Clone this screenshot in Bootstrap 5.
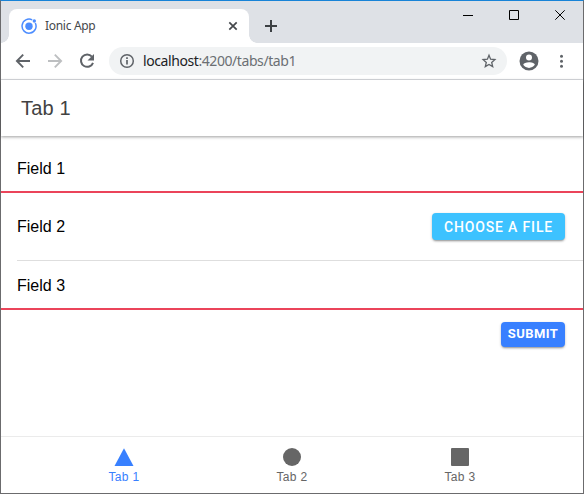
<!DOCTYPE html>
<html lang="en">
<head>
<meta charset="utf-8">
<meta name="viewport" content="width=device-width, initial-scale=1">
<title>Ionic App</title>
<link href="https://cdn.jsdelivr.net/npm/bootstrap@5.3.0/dist/css/bootstrap.min.css" rel="stylesheet">
<style>
body{font-family:"Liberation Sans",Arial,sans-serif;overflow:hidden;color:#000}
.window{height:494px;border:1px solid #6b6b6d;border-top-color:#1883d7}
.chrome-ui{font-family:"Noto Sans","Open Sans",sans-serif}
.titlebar{height:42px;background:#dee1e6;padding:8px 0 0 8px}
.browser-tab{width:240px;height:34px;border-radius:8px 8px 0 0;padding:0 10px 0 12px;font-size:12px;color:#45484c;position:relative}
.browser-tab::before,.browser-tab::after{content:"";position:absolute;bottom:0;width:8px;height:8px}
.browser-tab::before{left:-8px;background:radial-gradient(circle at 0 0,transparent 7.5px,#fff 8px)}
.browser-tab::after{right:-8px;background:radial-gradient(circle at 100% 0,transparent 7.5px,#fff 8px)}
.tab-title{letter-spacing:-.3px;margin-left:8px}
.toolbar{height:37px;border-bottom:1px solid #dadce0;padding:0 12px 0 14px}
.omnibox{height:28px;background:#f1f3f4;width:398px;margin-left:14px;padding:0 10px}
.url{font-size:14px;letter-spacing:-.42px;color:#202124;margin-left:8px;line-height:28px}
.url span{color:#6b6f73}
.avatar{margin-left:12px}
.app-header{height:56px;padding-left:20px;font-size:20px;letter-spacing:.15px;color:#424242;box-shadow:0 1px 3px rgba(0,0,0,.38);position:relative}
.field{padding:0 18px 0 16px;font-size:16px}
.field-error{border-bottom:2px solid #eb445a}
.f1{height:57px;padding-top:10px}
.f2{height:68px}
.f2::after{content:"";position:absolute;left:16px;right:0;bottom:0;height:1px;background:#dedede}
.f3{height:49px;padding-top:2px}
.ion-btn{font-family:Roboto,sans-serif;font-weight:500;border:0;border-radius:4px;color:#fff!important;box-shadow:0 2px 2px -1px rgba(0,0,0,.3),0 1px 3px rgba(0,0,0,.2);padding:0;white-space:nowrap}
.btn-choose{width:133px;height:27px;font-size:14px;letter-spacing:.84px;line-height:26px;margin-bottom:1px;background:#3dc2ff!important}
.btn-submit{width:64px;height:25px;font-size:13px;font-weight:700;letter-spacing:.4px;line-height:23px;padding-bottom:2px;background:#3880ff!important}
.tabbar{height:57px;border-top:1px solid #ebebeb;font-size:12px;color:#666;padding:0 39px}
.tabbar a{color:#666;width:168px;line-height:16px;letter-spacing:.3px;padding-top:10px}
.tabbar a.active{color:#3880ff}
svg{display:block;flex:none}
</style>
</head>
<body>
<div class="window d-flex flex-column bg-white">
  <div class="chrome-ui">
    <div class="titlebar d-flex">
      <div class="browser-tab bg-white d-flex align-items-center">
        <svg width="16" height="16" viewBox="0 0 16 16"><path d="M11.2 1.9A7 7 0 1 0 14.3 5" fill="none" stroke="#4c8dff" stroke-width="1.5"/><circle cx="8" cy="8.2" r="3.7" fill="#4c8dff"/><circle cx="13.3" cy="3" r="1.7" fill="#4c8dff"/></svg>
        <span class="tab-title">Ionic App</span>
        <svg class="ms-auto" width="12" height="12" viewBox="0 0 12 12"><path d="M2.3 2.3l7.4 7.4M9.7 2.3L2.3 9.7" stroke="#45484c" stroke-width="1.7"/></svg>
      </div>
      <svg class="ms-3 mt-1" width="12" height="26" viewBox="0 0 12 26"><path d="M0 13h12M6 7v12" stroke="#3c4043" stroke-width="2"/></svg>
      <svg class="ms-auto" width="120" height="12" viewBox="0 0 120 12" fill="none" stroke="#000"><path d="M0 6.5h10M46.5 1.5h9v9h-9zM92.3 1.3l9.4 9.4M101.7 1.3l-9.4 9.4"/></svg>
    </div>
    <div class="toolbar d-flex align-items-center">
      <svg width="16" height="16" viewBox="0 0 16 16" fill="none" stroke="#5f6368" stroke-width="1.9"><path d="M15 8H2.5M8.2 1.7L1.9 8l6.3 6.3"/></svg>
      <svg class="ms-3" width="16" height="16" viewBox="0 0 16 16" fill="none" stroke="#bdbfc1" stroke-width="1.9"><path d="M1 8h12.5M7.8 1.7L14.1 8l-6.3 6.3"/></svg>
      <svg class="ms-3" width="16" height="16" viewBox="0 0 16 16"><path d="M12.9 3.6A6.2 6.2 0 1 0 14 9.8" fill="none" stroke="#5f6368" stroke-width="2"/><path d="M15 1v6.5H8.5z" fill="#5f6368"/></svg>
      <div class="omnibox rounded-pill d-flex align-items-center">
        <svg width="16" height="16" viewBox="0 0 16 16"><circle cx="8" cy="8" r="6.3" fill="none" stroke="#5f6368" stroke-width="1.5"/><path d="M8 7v4.5M8 4.2v1.7" stroke="#5f6368" stroke-width="1.7"/></svg>
        <span class="url">localhost<span>:4200/tabs/tab1</span></span>
        <svg class="ms-auto" width="16" height="16" viewBox="0 0 16 16"><path d="M8 2.3l1.6 3.9 4.3.4-3.2 2.8 1 4.2L8 11.4l-3.7 2.2 1-4.2-3.2-2.8 4.3-.4z" fill="none" stroke="#5f6368" stroke-width="1.3"/></svg>
      </div>
      <svg class="avatar" width="20" height="20" viewBox="0 0 20 20"><circle cx="10" cy="10" r="9.5" fill="#5f6368"/><circle cx="10" cy="6.5" r="3" fill="#fff"/><path d="M4.2 13.8c.3-3.4 11.3-3.4 11.6 0a7 7 0 0 1-11.6 0z" fill="#fff"/></svg>
      <svg class="ms-auto" width="16" height="16" viewBox="0 0 16 16" fill="#5f6368"><circle cx="6.5" cy="3.3" r="1.5"/><circle cx="6.5" cy="8.3" r="1.5"/><circle cx="6.5" cy="13.3" r="1.5"/></svg>
    </div>
  </div>
  <header class="app-header bg-white d-flex align-items-center flex-shrink-0">Tab 1</header>
  <main class="flex-grow-1">
    <div class="field field-error f1 d-flex align-items-center">Field 1</div>
    <div class="field f2 d-flex align-items-center justify-content-between position-relative">Field 2
      <button class="btn ion-btn btn-choose">CHOOSE A FILE</button>
    </div>
    <div class="field field-error f3 d-flex align-items-center">Field 3</div>
    <div class="field d-flex justify-content-end pt-2"><button class="btn ion-btn btn-submit mt-1">SUBMIT</button></div>
  </main>
  <nav class="tabbar d-flex justify-content-center">
    <a class="active text-center text-decoration-none"><svg class="mx-auto" width="20" height="22" viewBox="0 0 20 22"><path d="M10 1.2L19.5 19H.5z" fill="#3880ff"/></svg>Tab 1</a>
    <a class="text-center text-decoration-none"><svg class="mx-auto" width="20" height="22" viewBox="0 0 20 22"><circle cx="10" cy="10" r="9" fill="#666"/></svg>Tab 2</a>
    <a class="text-center text-decoration-none"><svg class="mx-auto" width="20" height="22" viewBox="0 0 20 22"><rect x="1" y="1" width="18" height="18" rx="1" fill="#666"/></svg>Tab 3</a>
  </nav>
</div>
<script src="https://cdn.jsdelivr.net/npm/bootstrap@5.3.0/dist/js/bootstrap.bundle.min.js"></script>
</body>
</html>
